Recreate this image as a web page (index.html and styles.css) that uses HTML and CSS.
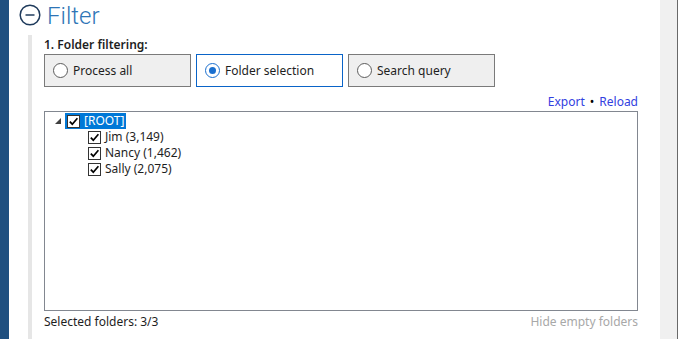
FILE: index.html
```html
<!DOCTYPE html>
<html>
<head>
<meta charset="utf-8">
<link rel="stylesheet" href="styles.css">
</head>
<body>
<div class="sidebar"></div>
<div class="main">
  <div class="title">
    <svg class="collapse" width="22" height="22" viewBox="0 0 22 22"><circle cx="11" cy="11" r="9.8" fill="none" stroke="#1f3b5c" stroke-width="1.5"/><line x1="6.5" y1="11" x2="15.5" y2="11" stroke="#1f3b5c" stroke-width="1.5"/></svg>
    <span class="title-text">Filter</span>
  </div>
  <div class="section">
    <div class="label">1. Folder filtering:</div>
    <div class="options">
      <div class="opt"><span class="radio"></span>Process all</div>
      <div class="opt opt-active"><span class="radio radio-on"></span>Folder selection</div>
      <div class="opt"><span class="radio"></span>Search query</div>
    </div>
    <div class="links"><span class="link">Export</span><span class="dot">•</span><span class="link">Reload</span></div>
    <div class="tree">
      <div class="row">
        <span class="expander"><svg width="6" height="6" viewBox="0 0 6 6"><polygon points="6,0 6,6 0,6" fill="#404040"/></svg></span>
        <span class="item item-selected"><span class="check"><svg width="11" height="11" viewBox="0 0 11 11"><path d="M1.8 5.6 L4.3 8.2 L9.4 2.3" fill="none" stroke="#000" stroke-width="1.7"/></svg></span><span class="item-text">[ROOT]</span></span>
      </div>
      <div class="row child">
        <span class="item"><span class="check"><svg width="11" height="11" viewBox="0 0 11 11"><path d="M1.8 5.6 L4.3 8.2 L9.4 2.3" fill="none" stroke="#000" stroke-width="1.7"/></svg></span><span class="item-text">Jim (3,149)</span></span>
      </div>
      <div class="row child">
        <span class="item"><span class="check"><svg width="11" height="11" viewBox="0 0 11 11"><path d="M1.8 5.6 L4.3 8.2 L9.4 2.3" fill="none" stroke="#000" stroke-width="1.7"/></svg></span><span class="item-text">Nancy (1,462)</span></span>
      </div>
      <div class="row child">
        <span class="item"><span class="check"><svg width="11" height="11" viewBox="0 0 11 11"><path d="M1.8 5.6 L4.3 8.2 L9.4 2.3" fill="none" stroke="#000" stroke-width="1.7"/></svg></span><span class="item-text">Sally (2,075)</span></span>
      </div>
    </div>
    <div class="footer"><span>Selected folders: 3/3</span><span class="muted">Hide empty folders</span></div>
  </div>
</div>
<div class="rightpanel"></div>
</body>
</html>
```
FILE: styles.css
```css
html, body {
  margin: 0;
  padding: 0;
}
body {
  width: 678px;
  height: 339px;
  overflow: hidden;
  display: flex;
  background: #ffffff;
  font-family: "Noto Sans", "Open Sans", sans-serif;
  font-size: 12px;
  color: #1e1e1e;
}
.sidebar {
  width: 9px;
  flex: none;
  background: #1f5080;
}
.main {
  width: 651px;
  flex: none;
  display: flex;
  flex-direction: column;
}
.rightpanel {
  width: 17px;
  flex: none;
  background: #f0f0f0;
  border-right: 1px solid #696969;
}
.title {
  height: 35px;
  display: flex;
  align-items: flex-start;
  padding-left: 10px;
  box-sizing: border-box;
}
.collapse {
  margin-top: 4px;
}
.title-text {
  margin-left: 6px;
  font-family: Roboto, "Open Sans", sans-serif;
  font-weight: 300;
  font-size: 24px;
  line-height: 32px;
  color: #2e75b6;
}
.section {
  flex: 1;
  margin-left: 19px;
  margin-right: 22px;
  border-left: 4px solid #e6e6e6;
  padding-left: 12px;
  padding-top: 2px;
  display: flex;
  flex-direction: column;
}
.label {
  font-weight: 600;
  line-height: 16px;
  height: 17px;
}
.options {
  display: flex;
  gap: 5px;
}
.opt {
  width: 147px;
  height: 33px;
  box-sizing: border-box;
  border: 1px solid #7a7a7a;
  background: #efefef;
  display: flex;
  align-items: center;
  padding-left: 8px;
  gap: 5px;
  font-size: 12px;
}
.opt-active {
  background: #ffffff;
  border-color: #0a64c8;
}
.radio {
  width: 15px;
  height: 15px;
  box-sizing: border-box;
  border: 1.5px solid #5c5c5c;
  border-radius: 50%;
  background: #ffffff;
  position: relative;
}
.radio-on {
  border-color: #1a6fcf;
}
.radio-on::after {
  content: "";
  position: absolute;
  left: 2.5px;
  top: 2.5px;
  width: 7px;
  height: 7px;
  border-radius: 50%;
  background: #1a6fcf;
}
.links {
  height: 24px;
  display: flex;
  justify-content: flex-end;
  align-items: flex-end;
  line-height: 16px;
  padding-bottom: 1px;
  box-sizing: border-box;
}
.link {
  color: #3240e0;
}
.dot {
  margin: 0 5px;
  color: #000;
}
.tree {
  height: 200px;
  box-sizing: border-box;
  border: 1px solid #828790;
  padding-top: 1px;
  padding-left: 6px;
}
.row {
  height: 16px;
  display: flex;
  align-items: center;
}
.child {
  padding-left: 35px;
}
.expander {
  width: 14px;
  display: flex;
  align-items: center;
  justify-content: flex-start;
  padding-left: 4px;
  box-sizing: border-box;
}
.item {
  display: flex;
  align-items: center;
  height: 16px;
  padding-left: 2px;
  padding-right: 2px;
}
.item-selected {
  background: #0078d7;
  color: #ffffff;
}
.check {
  width: 13px;
  height: 13px;
  box-sizing: border-box;
  border: 1px solid #333333;
  background: #ffffff;
  display: flex;
  align-items: center;
  justify-content: center;
}
.item-text {
  margin-left: 4px;
  line-height: 16px;
}
.footer {
  display: flex;
  justify-content: space-between;
  margin-top: 3px;
  line-height: 16px;
}
.muted {
  color: #a8a8a8;
}
```
